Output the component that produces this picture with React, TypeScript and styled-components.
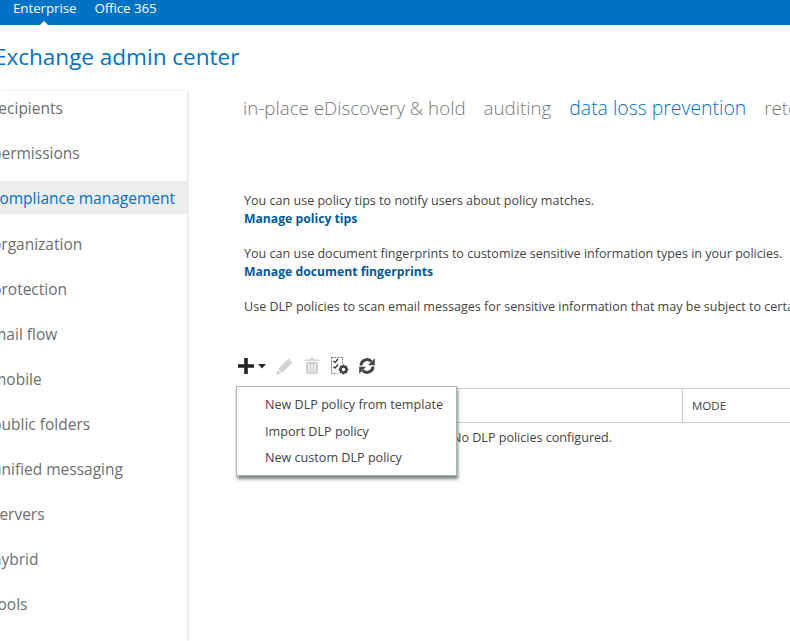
import styled, { createGlobalStyle } from "styled-components";

const BLUE = "#0072c6";
const GREY = "#6e6e6e";
const LINE = "#c6cdcd";

const FONT = "'Open Sans', 'Noto Sans', sans-serif";

const NAV = [
  "recipients",
  "permissions",
  "compliance management",
  "organization",
  "protection",
  "mail flow",
  "mobile",
  "public folders",
  "unified messaging",
  "servers",
  "hybrid",
  "tools",
];

const TABS = ["in-place eDiscovery & hold", "auditing", "data loss prevention", "retention"];

const MENU = ["New DLP policy from template", "Import DLP policy", "New custom DLP policy"];

const Global = createGlobalStyle`
  html, body { margin: 0; padding: 0; background: #fff; overflow: hidden; }
  body { width: 790px; height: 641px; font-family: ${FONT}; }
`;

const Page = styled.div`
  width: 790px;
  height: 641px;
  overflow: hidden;
  display: flex;
  flex-direction: column;
`;

const TopBar = styled.header`
  position: relative;
  height: 25px;
  flex-shrink: 0;
  background: ${BLUE};
  display: flex;
  gap: 18px;
  padding-left: 13px;
  align-items: flex-start;
`;

const TopLink = styled.span`
  color: #fff;
  font-size: 13.4px;
  line-height: 17px;
  letter-spacing: -0.1px;
`;

const Notch = styled.span`
  position: absolute;
  left: 40px;
  bottom: 0;
  border: 4px solid transparent;
  border-top: 0;
  border-bottom-color: #fff;
`;

const Title = styled.h1`
  margin: 0 0 0 -6px;
  height: 66px;
  flex-shrink: 0;
  font-size: 22.5px;
  font-weight: 400;
  line-height: 63px;
  color: ${BLUE};
  white-space: nowrap;
`;

const Body = styled.div`
  flex: 1;
  display: flex;
  min-height: 0;
`;

const Sidebar = styled.nav`
  width: 187px;
  flex-shrink: 0;
  display: flex;
  flex-direction: column;
  gap: 12px;
  box-shadow: 1px 0 2px rgba(0, 0, 0, 0.14);
  overflow: hidden;
`;

const NavRow = styled.div<{ $active?: boolean }>`
  height: 33px;
  flex-shrink: 0;
  margin-left: -8px;
  margin-bottom: ${p => (p.$active ? 1 : 0)}px;
  font-size: 15.5px;
  line-height: 35px;
  white-space: nowrap;
  color: ${p => (p.$active ? BLUE : GREY)};
  background: ${p => (p.$active ? "#ebedee" : "transparent")};
`;

const Main = styled.main`
  flex: 1;
  min-width: 0;
  position: relative;
  overflow: hidden;
  padding-left: 56px;
`;

const Tabs = styled.div`
  display: flex;
  gap: 18px;
  height: 34px;
  white-space: nowrap;
`;

const Tab = styled.span<{ $active?: boolean }>`
  font-size: ${p => (p.$active ? 19.4 : 18.75)}px;
  line-height: 34px;
  font-weight: 300;
  flex-shrink: 0;
  color: ${p => (p.$active ? BLUE : "#777777")};
`;

const Intro = styled.div`
  margin: 67px 0 0 1px;
  display: flex;
  flex-direction: column;
  gap: 17px;
`;

const Para = styled.div`
  font-size: 12.55px;
  line-height: 18px;
  color: #444;
  white-space: nowrap;
`;

const StrongLink = styled.div`
  font-weight: 700;
  color: #005a9e;
  font-size: 12.2px;
`;

const Toolbar = styled.div`
  margin: 39px 0 0 -5px;
  height: 22px;
  display: flex;
  align-items: center;
`;

const ToolIcon = styled.svg<{ $gap?: number }>`
  flex-shrink: 0;
  margin-left: ${p => p.$gap ?? 0}px;
`;

const Table = styled.div`
  position: relative;
  margin: 11px 0 0 -7px;
`;

const HeaderRow = styled.div`
  height: 33px;
  border-top: 1px solid ${LINE};
  border-bottom: 1px solid ${LINE};
  display: flex;
`;

const NameCol = styled.div`
  width: 446px;
  flex-shrink: 0;
  border-right: 1px solid ${LINE};
`;

const ModeCol = styled.div`
  padding-left: 9px;
  font-size: 11.5px;
  line-height: 33px;
  color: #444;
`;

const Empty = styled.div`
  padding-left: 216px;
  font-size: 12.55px;
  line-height: 30px;
  color: #444;
  white-space: nowrap;
`;

const Menu = styled.div`
  position: absolute;
  left: 0;
  top: -2px;
  width: 221px;
  height: 90px;
  box-sizing: border-box;
  padding-top: 5px;
  background: #fff;
  border: 1px solid #a9b5b3;
  box-shadow: 1px 3px 3px rgba(70, 80, 80, 0.7);
`;

const MenuItem = styled.div`
  height: 26.5px;
  padding-left: 28px;
  font-size: 12.6px;
  line-height: 26px;
  color: #444;
  white-space: nowrap;
`;

const AddIcon = () => (
  <ToolIcon width="16" height="16" viewBox="0 0 16 16">
    <path d="M0 6.200h6.200V0h3.600v6.200H16v3.600H9.800V16H6.200V9.800H0z" fill="#222" />
  </ToolIcon>
);

const CaretIcon = () => (
  <ToolIcon width="8" height="5" viewBox="0 0 8 5" $gap={4}>
    <path d="M0 0h8L4 4.500z" fill="#262626" />
  </ToolIcon>
);

const PencilIcon = () => (
  <ToolIcon width="17" height="17" viewBox="0 0 17 17" $gap={10}>
    <path d="M12.500 .5l4 4L6 15l-4-4zM1.400 12l3.600 3.600L.3 16.700z" fill="#d4d4d4" />
  </ToolIcon>
);

const TrashIcon = () => (
  <ToolIcon width="14" height="16" viewBox="0 0 14 16" $gap={12}>
    <path d="M5 0h4v1.500h5V3H0V1.500h5zM1 4h12v12H1z" fill="#d2d2d2" />
    <path d="M4 6v8M7 6v8M10 6v8" stroke="#fff" strokeWidth="1" />
  </ToolIcon>
);

const PolicyIcon = () => (
  <ToolIcon width="18" height="18" viewBox="0 0 18 18" $gap={12}>
    <path d="M.5.500h11v6M.5.500v16h6" fill="none" stroke="#777" strokeDasharray="2 1" />
    <path d="M2.500 4l1.500 1.600L7 2M2.500 9.500l1.500 1.600L7 7.500" fill="none" stroke="#333" strokeWidth="1.300" />
    <circle cx="12.500" cy="12.500" r="3" fill="none" stroke="#444" strokeWidth="2.600" />
    <path d="M12.500 7.500v2M12.500 15.500v2M7.500 12.500h2M15.500 12.500h2M9 9l1.400 1.400M14.600 14.600L16 16M9 16l1.400-1.400M14.600 10.400L16 9" stroke="#444" strokeWidth="1.600" />
  </ToolIcon>
);

const RefreshIcon = () => (
  <ToolIcon width="16" height="16" viewBox="0 0 16 16" $gap={10}>
    <path d="M2 7.500a6 6 0 0 1 10.300-4" fill="none" stroke="#444" strokeWidth="3" />
    <path d="M14 8.500a6 6 0 0 1-10.300 4" fill="none" stroke="#444" strokeWidth="3" />
    <path d="M15.800 .3v7H9zM.2 15.700v-7H7z" fill="#444" />
  </ToolIcon>
);

export default function App() {
  return (
    <Page>
      <Global />
      <TopBar>
        <TopLink>Enterprise</TopLink>
        <TopLink>Office 365</TopLink>
        <Notch />
      </TopBar>
      <Title>Exchange admin center</Title>
      <Body>
        <Sidebar>
          {NAV.map(item => (
            <NavRow key={item} $active={item === "compliance management"}>
              {item}
            </NavRow>
          ))}
        </Sidebar>
        <Main>
          <Tabs>
            {TABS.map(tab => (
              <Tab key={tab} $active={tab === "data loss prevention"}>
                {tab}
              </Tab>
            ))}
          </Tabs>
          <Intro>
            <Para>
              You can use policy tips to notify users about policy matches.
              <StrongLink>Manage policy tips</StrongLink>
            </Para>
            <Para>
              You can use document fingerprints to customize sensitive information types in your policies.
              <StrongLink>Manage document fingerprints</StrongLink>
            </Para>
            <Para>Use DLP policies to scan email messages for sensitive information that may be subject to certain regulations.</Para>
          </Intro>
          <Toolbar>
            <AddIcon />
            <CaretIcon />
            <PencilIcon />
            <TrashIcon />
            <PolicyIcon />
            <RefreshIcon />
          </Toolbar>
          <Table>
            <HeaderRow>
              <NameCol />
              <ModeCol>MODE</ModeCol>
            </HeaderRow>
            <Empty>No DLP policies configured.</Empty>
            <Menu>
              {MENU.map(item => (
                <MenuItem key={item}>{item}</MenuItem>
              ))}
            </Menu>
          </Table>
        </Main>
      </Body>
    </Page>
  );
}
